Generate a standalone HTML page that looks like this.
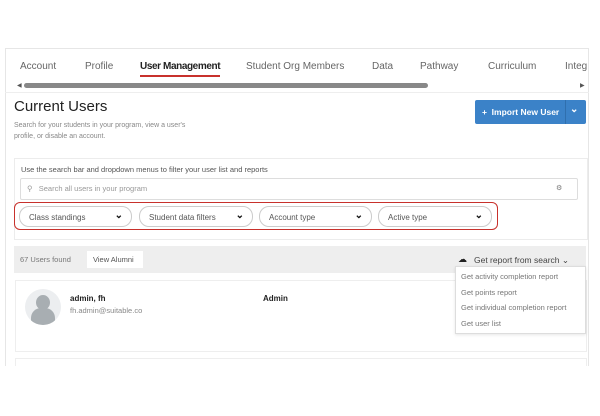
<!DOCTYPE html>
<html><head><style>
*{margin:0;padding:0;box-sizing:border-box}
body{width:600px;height:416px;background:#fff;font-family:"Liberation Sans",sans-serif;position:relative;overflow:hidden;color:#333}
.a{position:absolute;white-space:nowrap}
.tab{font-size:10px;color:#666;top:61px}
.dd{position:absolute;top:206px;height:21px;border:1px solid #ccc;border-radius:10px;font-size:8px;color:#555;padding:6px 0 0 9px;background:#fff}
.dd b{position:absolute;right:8px;top:3px;font-size:10px;color:#111;font-weight:900}
.mi{font-size:7.5px;color:#777;left:461px}
</style></head><body>
<div class="a" style="left:5px;top:48px;width:584px;height:330px;border:1px solid #e6e6e6;border-bottom:none"></div>
<div class="a tab" style="left:20px">Account</div>
<div class="a tab" style="left:85px">Profile</div>
<div class="a tab" style="left:140px;color:#222;font-weight:bold;letter-spacing:-0.4px">User Management</div>
<div class="a" style="top:75px;height:2px;background:#c8312c;left:140px;width:80px"></div>
<div class="a tab" style="left:246px">Student Org Members</div>
<div class="a tab" style="left:372px">Data</div>
<div class="a tab" style="left:420px">Pathway</div>
<div class="a tab" style="left:488px">Curriculum</div>
<div class="a tab" style="left:565px">Integ</div>
<div class="a" style="left:17px;top:82px;font-size:6px;color:#555">◀</div>
<div class="a" style="left:580px;top:82px;font-size:6px;color:#555">▶</div>
<div class="a" style="left:24px;top:83px;width:404px;height:5px;border-radius:3px;background:#888"></div>
<div class="a" style="left:5px;top:92px;width:584px;height:1px;background:#eee"></div>
<div class="a" style="left:14px;top:98px;font-size:15px;color:#222">Current Users</div>
<div class="a" style="left:14px;top:120px;font-size:7px;color:#888;line-height:11px">Search for your students in your program, view a user's<br>profile, or disable an account.</div>
<div class="a" style="left:475px;top:100px;width:111px;height:24px;background:#3b82c8;border-radius:2px;color:#fff;font-size:8.5px;font-weight:bold;padding:7px 0 0 7px">+ &nbsp;Import New User</div>
<div class="a" style="left:565px;top:100px;width:1px;height:24px;background:#2f6fae"></div>
<div class="a" style="left:570px;top:104px;color:#fff;font-size:10px;font-weight:bold">⌄</div>
<div class="a" style="left:14px;top:158px;width:574px;height:82px;border:1px solid #ececec"></div>
<div class="a" style="left:21px;top:165px;font-size:7.5px;color:#555">Use the search bar and dropdown menus to filter your user list and reports</div>
<div class="a" style="left:20px;top:178px;width:558px;height:22px;border:1px solid #ddd;border-radius:2px"></div>
<div class="a" style="left:27px;top:184px;font-size:7.5px;color:#999">⚲ &nbsp;&nbsp;Search all users in your program</div>
<div class="a" style="left:556px;top:184px;font-size:7px;color:#777">⚙</div>
<div class="a" style="left:14px;top:202px;width:484px;height:28px;border:1.5px solid #c8312c;border-radius:6px"></div>
<div class="dd" style="left:19px;width:113px">Class standings<b>⌄</b></div>
<div class="dd" style="left:139px;width:114px">Student data filters<b>⌄</b></div>
<div class="dd" style="left:259px;width:113px">Account type<b>⌄</b></div>
<div class="dd" style="left:378px;width:114px">Active type<b>⌄</b></div>
<div class="a" style="left:14px;top:246px;width:572px;height:27px;background:#eeeeee"></div>
<div class="a" style="left:20px;top:255px;font-size:7.5px;color:#777">67 Users found</div>
<div class="a" style="left:87px;top:251px;width:56px;height:17px;background:#fff;font-size:7.5px;color:#555;padding:4px 0 0 6px">View Alumni</div>
<div class="a" style="left:458px;top:254px;font-size:9px;color:#222">☁</div>
<div class="a" style="left:474px;top:255px;font-size:8.5px;color:#444">Get report from search ⌄</div>
<div class="a" style="left:15px;top:280px;width:572px;height:72px;border:1px solid #eee"></div>
<div class="a" style="left:455px;top:266px;width:131px;height:68px;background:#fff;border:1px solid #ddd;box-shadow:0 1px 3px rgba(0,0,0,.1)"></div>
<div class="a mi" style="top:272px">Get activity completion report</div>
<div class="a mi" style="top:288px">Get points report</div>
<div class="a mi" style="top:303px">Get individual completion report</div>
<div class="a mi" style="top:319px">Get user list</div>
<div class="a" style="left:25px;top:289px;width:36px;height:36px;border-radius:50%;background:#eceef0;overflow:hidden">
<div class="a" style="left:11px;top:6px;width:14px;height:15px;border-radius:50%;background:#a8aeb2"></div>
<div class="a" style="left:6px;top:19px;width:24px;height:20px;border-radius:10px 10px 0 0;background:#a8aeb2"></div></div>
<div class="a" style="left:70px;top:294px;font-size:8px;font-weight:bold;color:#222">admin, fh</div>
<div class="a" style="left:70px;top:306px;font-size:7.5px;color:#888">fh.admin@suitable.co</div>
<div class="a" style="left:263px;top:294px;font-size:8px;font-weight:bold;color:#222">Admin</div>
<div class="a" style="left:15px;top:358px;width:572px;height:20px;border:1px solid #eee;border-bottom:none"></div>
<div class="a" style="left:0;top:366px;width:600px;height:50px;background:#fff"></div>
</body></html>
